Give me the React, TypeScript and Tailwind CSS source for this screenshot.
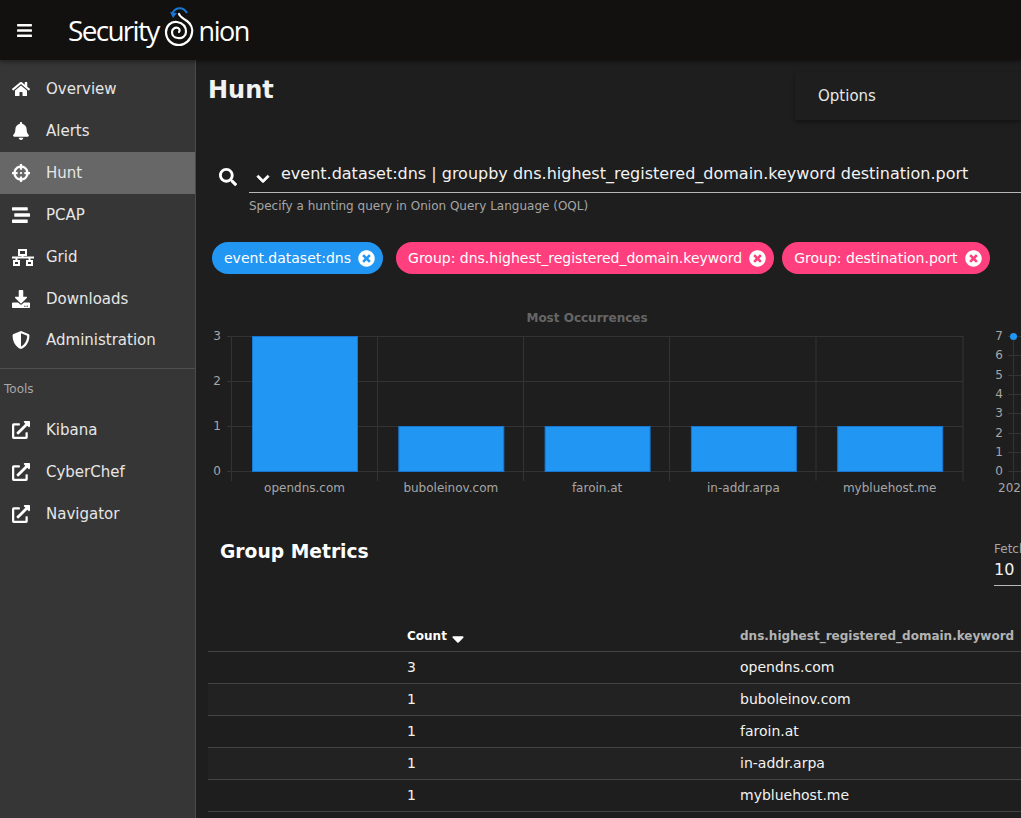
import type { ReactNode } from "react";
import {
  FaBars,
  FaBell,
  FaChevronDown,
  FaCrosshairs,
  FaDownload,
  FaExternalLinkAlt,
  FaHome,
  FaSearch,
  FaShieldAlt,
  FaSortDown,
  FaStream,
  FaTimesCircle,
} from "react-icons/fa";

function GridIcon() {
  return (
    <svg viewBox="0 0 22 18" fill="none" stroke="currentColor" strokeWidth="2" className="h-[18px] w-auto">
      <rect x="7" y="2" width="7" height="5" />
      <path d="M0 9.5H22M10.5 7V9.5M4.5 9.5V13M17.5 9.5V13" />
      <rect x="2" y="13" width="5" height="4" />
      <rect x="15" y="13" width="5" height="4" />
    </svg>
  );
}

const mainLinks = [
  { label: "Overview", icon: <FaHome /> },
  { label: "Alerts", icon: <FaBell /> },
  { label: "Hunt", icon: <FaCrosshairs />, active: true },
  { label: "PCAP", icon: <FaStream /> },
  { label: "Grid", icon: <GridIcon /> },
  { label: "Downloads", icon: <FaDownload /> },
  { label: "Administration", icon: <FaShieldAlt />, short: true },
];

const toolLinks = ["Kibana", "CyberChef", "Navigator"];

const bars = [
  { label: "opendns.com", value: 3 },
  { label: "buboleinov.com", value: 1 },
  { label: "faroin.at", value: 1 },
  { label: "in-addr.arpa", value: 1 },
  { label: "mybluehost.me", value: 1 },
];

const rows = [
  { count: 3, domain: "opendns.com", striped: false },
  { count: 1, domain: "buboleinov.com", striped: true },
  { count: 1, domain: "faroin.at", striped: false },
  { count: 1, domain: "in-addr.arpa", striped: true },
  { count: 1, domain: "mybluehost.me", striped: false },
];

function NavItem({ icon, label, active, short }: { icon: ReactNode; label: string; active?: boolean; short?: boolean }) {
  return (
    <div className={`${short ? "h-[40px]" : "h-[42px]"} flex items-center pl-3 ${active ? "bg-[#676767]" : ""}`}>
      <span className="w-[34px] text-white flex items-center [&>svg]:h-[18px] [&>svg]:w-auto">{icon}</span>
      <span className="text-[15px] text-[#e6e6e6]">{label}</span>
    </div>
  );
}

function Chip({ text, color, className = "" }: { text: string; color: string; className?: string }) {
  return (
    <div className={`h-8 rounded-full flex items-center pl-3 pr-2 gap-[7px] text-[14px] text-white ${color} ${className}`}>
      <span>{text}</span>
      <FaTimesCircle className="text-[17px]" />
    </div>
  );
}

function Logo() {
  return (
    <div className="flex items-center text-white font-normal leading-none font-['Open_Sans',sans-serif]">
      <span className="text-[28px] tracking-[-1.7px]">Security</span>
      <svg width="44" height="46" viewBox="0 0 44 46" fill="none" className="-mt-[10px] shrink-0">
        <path d="M13 12 C 16 5 24 4 28 11" stroke="#1976d2" strokeWidth="2" />
        <path d="M11 10 L18 11 L14 16 Z" fill="#1976d2" />
        <path
          d="M20 12 C 21 15 24 16 28 19 C 32 22 34 27 33 31 C 32 38 26 43 20 43 C 12 43 7 37 7 30 C 7 24 12 19 18 20 C 24 21 27 25 27 30 C 27 34 23 37 19 36 C 15 36 13 33 13 30 C 13 27 16 25 19 26 C 21 27 21 29 20 30"
          stroke="white"
          strokeWidth="2.2"
          strokeLinecap="round"
        />
      </svg>
      <span className="-ml-1 text-[27px] tracking-[-1.5px]">nion</span>
    </div>
  );
}

function BarChart() {
  const xs = [23.5, 169.5, 315.5, 461.5, 608, 755];
  const ys = [31.5, 76.5, 121.5, 166.5];
  return (
    <svg width="780" height="190" className="shrink-0" fontFamily="'DejaVu Sans', sans-serif">
      <text x="379" y="17" textAnchor="middle" fontSize="12" fontWeight="700" fill="#666666">
        Most Occurrences
      </text>
      {ys.map((y) => (
        <line key={y} x1="19" x2="755" y1={y} y2={y} stroke="#333333" />
      ))}
      {xs.map((x) => (
        <line key={x} x1={x} x2={x} y1="31" y2="176" stroke="#333333" />
      ))}
      {["3", "2", "1", "0"].map((t, i) => (
        <text key={t} x="13" y={ys[i] + 3.5} textAnchor="end" fontSize="12" fill="#a6a6a6">
          {t}
        </text>
      ))}
      {bars.map((b, i) => {
        const x = 44.5 + i * 146.3;
        const top = 166.5 - b.value * 45;
        return (
          <g key={b.label}>
            <rect x={x} y={top} width="105" height={b.value * 45} fill="#2196f3" stroke="#1976d2" />
            <text x={x + 52} y="187" textAnchor="middle" fontSize="12" fill="#a6a6a6">
              {b.label}
            </text>
          </g>
        );
      })}
    </svg>
  );
}

function LineChart() {
  const ys = [31.5, 50.5, 70.5, 89.5, 108.5, 128.5, 147.5, 166.5];
  return (
    <svg width="120" height="190" className="shrink-0" fontFamily="'DejaVu Sans', sans-serif">
      {ys.map((y, i) => (
        <g key={y}>
          <line x1="20" x2="33" y1={y} y2={y} stroke="#333333" />
          <text x="15" y={y + 3.5} textAnchor="end" fontSize="12" fill="#a6a6a6">
            {7 - i}
          </text>
        </g>
      ))}
      <line x1="25.5" x2="25.5" y1="31" y2="176" stroke="#333333" />
      <circle cx="25.5" cy="31.5" r="3.5" fill="#2196f3" />
      <text x="10" y="187" fontSize="12" fill="#a6a6a6">
        2021
      </text>
    </svg>
  );
}

export default function App() {
  return (
    <div className="h-screen w-full overflow-hidden flex flex-col bg-[#1e1e1e] font-['DejaVu_Sans',sans-serif]">
      {/* Top bar */}
      <header className="h-[60px] shrink-0 bg-[#12110f] flex items-center pl-4 shadow-[0_2px_4px_rgba(0,0,0,0.4)] z-10">
        <FaBars className="text-white text-[17px] mr-[35px]" />
        <Logo />
      </header>

      <div className="flex-1 flex min-h-0">
        {/* Side nav */}
        <aside className="w-[196px] shrink-0 bg-[#363636] border-r border-[#4a4a4a] pt-2">
          {mainLinks.map((l) => (
            <NavItem key={l.label} {...l} />
          ))}
          <div className="border-t border-[#4f4f4f] mt-2 pt-3 pb-3 pl-1 text-[12px] leading-4 text-[#a8a8a8]">Tools</div>
          {toolLinks.map((t) => (
            <NavItem key={t} icon={<FaExternalLinkAlt />} label={t} />
          ))}
        </aside>

        {/* Main */}
        <main className="flex-1 min-w-0 overflow-hidden pl-3">
          <div className="flex h-[60px] items-start">
            <h1 className="mt-[14px] w-[587px] shrink-0 text-[24px] font-bold leading-8 text-[#f2f2f2]">Hunt</h1>
            <div className="mt-3 h-12 flex-1 rounded-tl bg-[#1e1e1e] pl-[23px] flex items-center text-[15px] text-[#e6e6e6] shadow-[0_2px_4px_rgba(0,0,0,0.4)]">
              Options
            </div>
          </div>

          <div className="mt-[32px] flex items-start pl-[11px]">
            <FaSearch className="mt-[16px] text-white text-[18px] shrink-0" />
            <div className="ml-[12px] flex-1 min-w-0">
              <div className="h-[41px] pt-1 flex items-center border-b border-[#b8b8b8] whitespace-nowrap overflow-hidden">
                <FaChevronDown className="mt-[10px] ml-[7px] text-white text-[14px] mr-[11px] shrink-0 stroke-white stroke-[30]" />
                <span className="text-[16px] text-[#f2f2f2]">
                  event.dataset:dns | groupby dns.highest_registered_domain.keyword destination.port
                </span>
              </div>
              <p className="mt-[5px] text-[12px] leading-4 text-[#a6a6a6]">Specify a hunting query in Onion Query Language (OQL)</p>
            </div>
          </div>

          <div className="mt-[28px] flex gap-2 pl-1 whitespace-nowrap">
            <Chip text="event.dataset:dns" color="bg-[#2196f3]" className="mr-[5px]" />
            <Chip text="Group: dns.highest_registered_domain.keyword" color="bg-[#ff3f7e]" />
            <Chip text="Group: destination.port" color="bg-[#ff3f7e]" />
          </div>

          <div className="mt-[31px] flex">
            <BarChart />
            <LineChart />
          </div>

          <div className="mt-[41px] flex items-start pl-3 h-[79px]">
            <h2 className="w-[774px] shrink-0 text-[18.72px] font-bold leading-8 text-white">Group Metrics</h2>
            <div className="flex-1 mt-[5px] border-b border-[#b8b8b8] h-[45px] whitespace-nowrap overflow-hidden">
              <div className="text-[12px] leading-4 text-[#a6a6a6]">Fetch Limit</div>
              <div className="mt-[1px] text-[16px] leading-6 text-[#f2f2f2]">10</div>
            </div>
          </div>

          <table className="w-[1000px] border-collapse text-[14px] text-[#f2f2f2]">
            <thead>
              <tr className="h-[36px] border-b border-[#444444] text-[12px] font-bold text-left">
                <th className="w-[199px]"></th>
                <th className="w-[333px] pt-[6px] text-white">
                  <span className="inline-flex items-center gap-[1px]">
                    Count <FaSortDown className="text-[20px] text-white -mt-[1px]" />
                  </span>
                </th>
                <th className="pt-[6px] text-[#b3b3b3]">dns.highest_registered_domain.keyword</th>
              </tr>
            </thead>
            <tbody>
              {rows.map((r) => (
                <tr key={r.domain} className={`h-[32px] border-b border-[#444444] ${r.striped ? "bg-[#222222]" : ""}`}>
                  <td></td>
                  <td>{r.count}</td>
                  <td>{r.domain}</td>
                </tr>
              ))}
            </tbody>
          </table>
        </main>
      </div>
    </div>
  );
}
